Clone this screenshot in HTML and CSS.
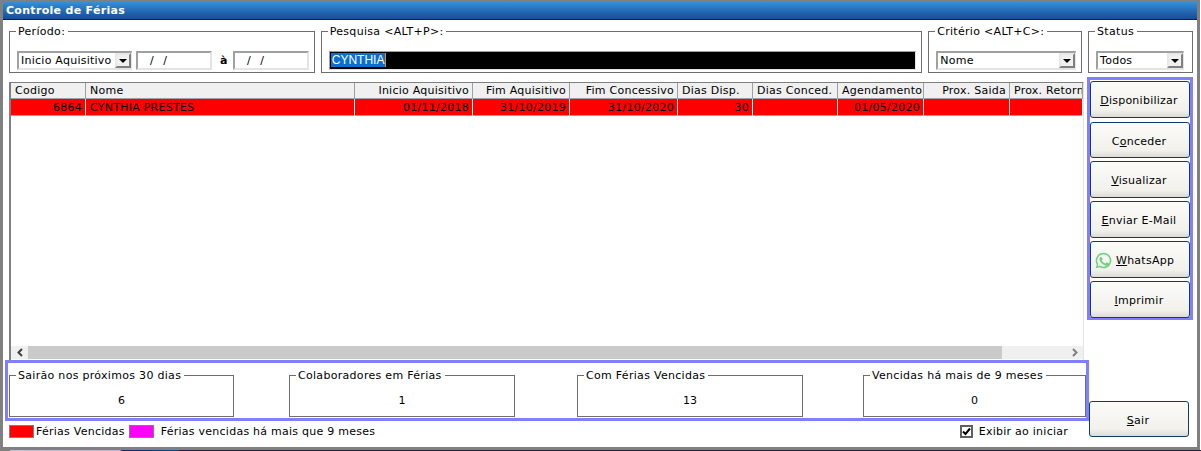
FILE: index.html
```html
<!DOCTYPE html>
<html lang="en">
<head>
    <meta charset="UTF-8">
    <title>Controle de Férias</title>
    <link rel="stylesheet" href="styles.css">
</head>
<body>
    <div class="frame">
        <div class="window">
            <div class="title-bar">Controle de Férias</div>
            <div class="content">
                <div class="filters">
                    <fieldset class="group group-periodo">
                        <legend>Período:</legend>
                        <div class="select select-periodo"><span>Inicio Aquisitivo</span><i class="arrow"></i></div>
                        <div class="date-input">/ /</div>
                        <b class="date-sep">à</b>
                        <div class="date-input">/ /</div>
                    </fieldset>
                    <fieldset class="group group-pesquisa">
                        <legend>Pesquisa &lt;ALT+P&gt;:</legend>
                        <div class="search-input"><span class="selected">CYNTHIA</span><span class="caret"></span></div>
                    </fieldset>
                    <fieldset class="group group-criterio">
                        <legend>Critério &lt;ALT+C&gt;:</legend>
                        <div class="select"><span>Nome</span><i class="arrow"></i></div>
                    </fieldset>
                    <fieldset class="group group-status">
                        <legend>Status</legend>
                        <div class="select"><span>Todos</span><i class="arrow"></i></div>
                    </fieldset>
                </div>

                <div class="middle">
                    <div class="left-col">
                        <div class="grid">
                            <table>
                                <colgroup>
                                    <col class="c1"><col class="c2"><col class="c3"><col class="c4"><col class="c5">
                                    <col class="c6"><col class="c7"><col class="c8"><col class="c9"><col class="c10">
                                </colgroup>
                                <thead>
                                    <tr>
                                        <th>Codigo</th>
                                        <th>Nome</th>
                                        <th class="right">Inicio Aquisitivo</th>
                                        <th class="right">Fim Aquisitivo</th>
                                        <th class="right">Fim Concessivo</th>
                                        <th>Dias Disp.</th>
                                        <th>Dias Conced.</th>
                                        <th class="right">Agendamento</th>
                                        <th class="right">Prox. Saida</th>
                                        <th>Prox. Retorno</th>
                                    </tr>
                                </thead>
                                <tbody>
                                    <tr class="expired">
                                        <td class="right">6864</td>
                                        <td>CYNTHIA PRESTES</td>
                                        <td class="right">01/11/2018</td>
                                        <td class="right">31/10/2019</td>
                                        <td class="right">31/10/2020</td>
                                        <td class="right">30</td>
                                        <td></td>
                                        <td class="right">01/05/2020</td>
                                        <td></td>
                                        <td></td>
                                    </tr>
                                </tbody>
                            </table>
                            <div class="scrollbar">
                                <div class="scroll-btn">
                                    <svg width="8" height="9" viewBox="0 0 8 9"><path d="M6 1 2.500 4.500 6 8" fill="none" stroke="#404040" stroke-width="2"/></svg>
                                </div>
                                <div class="scroll-thumb"></div>
                                <div class="scroll-track"></div>
                                <div class="scroll-btn">
                                    <svg width="8" height="9" viewBox="0 0 8 9"><path d="M2 1 5.500 4.500 2 8" fill="none" stroke="#808080" stroke-width="2"/></svg>
                                </div>
                            </div>
                        </div>
                        <div class="stats">
                            <fieldset class="group stat"><legend>Sairão nos próximos 30 dias</legend>6</fieldset>
                            <fieldset class="group stat"><legend>Colaboradores em Férias</legend>1</fieldset>
                            <fieldset class="group stat"><legend>Com Férias Vencidas</legend>13</fieldset>
                            <fieldset class="group stat"><legend>Vencidas há mais de 9 meses</legend>0</fieldset>
                        </div>
                        <div class="legend-row">
                            <span class="swatch swatch-red"></span>
                            <span class="legend-text">Férias Vencidas</span>
                            <span class="swatch swatch-pink"></span>
                            <span class="legend-text legend-long">Férias vencidas há mais que 9 meses</span>
                            <span class="checkbox">
                                <svg width="9" height="9" viewBox="0 0 9 9"><path d="M1 4.500 3.500 7 8 1.500" fill="none" stroke="#000" stroke-width="2"/></svg>
                            </span>
                            <span class="check-label">Exibir ao iniciar</span>
                        </div>
                    </div>

                    <div class="right-col">
                        <div class="actions">
                            <button><u>D</u>isponibilizar</button>
                            <button>C<u>o</u>nceder</button>
                            <button><u>V</u>isualizar</button>
                            <button><u>E</u>nviar E-Mail</button>
                            <button class="whatsapp">
                                <svg width="17" height="17" viewBox="0 0 24 24"><path fill="#6fd07f" d="M12 1a11 11 0 0 0-9.400 16.700L1 23l5.500-1.500A11 11 0 1 0 12 1zm0 2.200a8.800 8.800 0 1 1-4.700 16.200l-.4-.2-3 .8.800-3-.2-.4A8.800 8.800 0 0 1 12 3.200z"/><path fill="#6fd07f" d="M8.500 7c-.3 0-.7.100-1 .5-.4.400-1.200 1.200-1.200 2.800s1.200 3.200 1.400 3.400c.2.200 2.300 3.600 5.700 4.900 2.800 1.100 3.400.9 4 .8.600-.1 2-.8 2.200-1.600.3-.8.300-1.400.2-1.600-.1-.1-.3-.2-.6-.4l-2.300-1.100c-.3-.1-.5-.2-.8.200l-1 1.300c-.2.200-.4.300-.7.100-.3-.2-1.400-.5-2.700-1.700-1-.9-1.700-2-1.900-2.300-.2-.3 0-.5.100-.7l.9-1.200c.1-.2.100-.4 0-.6L9.700 7.600C9.500 7 9.200 7 9 7z"/></svg>
                                <span><u>W</u>hatsApp</span>
                            </button>
                            <button><u>I</u>mprimir</button>
                        </div>
                        <button class="exit"><u>S</u>air</button>
                    </div>
                </div>
            </div>
        </div>
    </div>
    <div class="desktop"></div>
</body>
</html>
```

FILE: styles.css
```css
html, body {
    margin: 0;
    height: 100%;
    overflow: hidden;
}
body {
    font-family: "DejaVu Sans", Verdana, sans-serif;
    font-size: 11px;
    color: #000;
    background-color: #fff;
}
.frame {
    width: 1200px;
    height: 450px;
    padding: 2px 3px 3px 3px;
    box-sizing: border-box;
    background-color: #808080;
}
.desktop {
    height: 1px;
    background: linear-gradient(to right, #808080 10px, #c4c0e4 10px, #c4b0d8 120px, #0a2a6a 122px, #0a4a8a 178px, #241c4c 180px);
}
.window {
    height: 445px;
    background-color: #fff;
    display: flex;
    flex-direction: column;
}
.title-bar {
    height: 17px;
    line-height: 17px;
    padding-left: 3px;
    color: #fff;
    font-weight: bold;
    letter-spacing: 0.3px;
    background: linear-gradient(to bottom, #3590d8, #1f5fa8 70%, #174f98);
    border-bottom: 1px solid #0a1e5c;
    flex: none;
}
.content {
    flex: 1;
    padding: 5px 4px 0 6px;
    display: flex;
    flex-direction: column;
}

/* group boxes */
.group {
    margin: 0;
    padding: 0;
    border: 1px solid #6e6e6e;
    min-width: 0;
    box-sizing: border-box;
}
.group legend {
    padding: 0 3px 0 2px;
    margin-left: 6px;
    line-height: 13px;
    letter-spacing: 0.3px;
}
.filters {
    display: flex;
    gap: 6px;
    height: 48px;
    flex: none;
}
.filters .group {
    height: 48px;
    display: flex;
    align-items: center;
    padding: 10px 5px 0 7px;
}
.filters .group legend { margin-left: -1px; }
.group-periodo { width: 306px; gap: 4px; }
.group-pesquisa { width: 602px; }
.group-criterio { width: 154px; }
.filters .group-status { width: 105px; padding-right: 8px; }
.group-periodo .date-sep { margin: 0 3px 0 4px; font-size: 11px; width: 6px; }

.select, .date-input, .search-input {
    height: 19px;
    box-sizing: border-box;
    border: 2px solid #a0a0a0;
    border-right-color: #e4e4e4;
    border-bottom-color: #e4e4e4;
    line-height: 15px;
}
.select {
    flex: 1;
    display: flex;
    align-items: center;
    justify-content: space-between;
    padding-left: 2px;
    letter-spacing: 0.25px;
    border-right: 1px solid #e4e4e4;
}
.select-periodo { flex: none; width: 115px; }
.arrow {
    width: 16px;
    height: 15px;
    box-sizing: border-box;
    flex: none;
    background-color: #f0f0f0;
    border: 2px solid;
    border-color: #e8e8e8 #808080 #808080 #e8e8e8;
    position: relative;
}
.arrow::after {
    content: "";
    position: absolute;
    left: 2px;
    top: 4px;
    border-left: 4px solid transparent;
    border-right: 4px solid transparent;
    border-top: 4px solid #000;
}
.date-input {
    width: 76px;
    padding-left: 12px;
    word-spacing: 6px;
    flex: none;
}
.search-input {
    flex: 1;
    background-color: #000;
    color: #fff;
    display: flex;
    align-items: center;
    padding-left: 1px;
    border-width: 1px;
    font-family: "Liberation Sans", Arial, sans-serif;
    font-size: 12px;
}
.selected {
    background-color: #0a6fd0;
    line-height: 14px;
    padding: 0 1px;
}
.caret {
    width: 1px;
    height: 14px;
    background-color: #f08020;
}

/* middle part */
.middle {
    flex: 1;
    display: flex;
    margin-top: 9px;
}
.left-col {
    width: 1075px;
    flex: none;
    display: flex;
    flex-direction: column;
}
.grid {
    height: 278px;
    box-sizing: border-box;
    border: 1px solid #808080;
    border-right-color: #e4e4e4;
    border-bottom: none;
    border-left-width: 2px;
    padding-bottom: 1px;
    display: flex;
    flex-direction: column;
    justify-content: space-between;
    overflow: hidden;
    flex: none;
}
table {
    border-collapse: separate;
    border-spacing: 0;
    table-layout: fixed;
    width: 1072px;
}
.c1 { width: 75px; }
.c2 { width: 269px; }
.c3 { width: 118px; }
.c4 { width: 97px; }
.c5 { width: 108px; }
.c6 { width: 75px; }
.c7 { width: 85px; }
.c8 { width: 86px; }
.c9 { width: 86px; }
.c10 { width: 73px; }
th, td {
    padding: 0 3px 0 4px;
    height: 15px;
    line-height: 14px;
    font-weight: normal;
    text-align: left;
    white-space: nowrap;
    overflow: hidden;
    letter-spacing: 0.25px;
}
th {
    background-color: #f0f0f0;
    border-right: 1px solid #a0a0a0;
    border-bottom: 1px solid #a0a0a0;
}
td {
    padding-top: 2px;
    height: 13px;
    border-right: 1px solid #fff;
    border-bottom: 1px solid #a0a0a0;
}
.right { text-align: right; }
.expired td { background-color: #ff0000; }

.scrollbar {
    height: 13px;
    display: flex;
    flex: none;
    background-color: #f0f0f0;
}
.scroll-btn {
    width: 17px;
    display: flex;
    align-items: center;
    justify-content: center;
    background-color: #f0f0f0;
    flex: none;
}
.scroll-thumb { width: 974px; background-color: #cacaca; flex: none; }
.scroll-track { flex: 1; }

/* stats, blue box */
.stats {
    display: flex;
    height: 61px;
    box-sizing: border-box;
    margin: 0 -5px 0 -4px;
    border: 3px solid #8080ff;
    padding: 6px 0 0 1px;
    flex: none;
}
.stat {
    width: 226px;
    height: 48px;
    text-align: center;
    line-height: 38px;
    flex: none;
}
.stat:nth-child(1) { width: 225px; }
.stat:nth-child(2) { margin-left: 55px; }
.stat:nth-child(3) { margin-left: 62px; }
.stat:nth-child(4) { width: 223px; margin-left: 60px; }
.stat legend {
    text-align: left;
}
.legend-row {
    display: flex;
    align-items: center;
    margin-top: 3px;
    height: 15px;
}
.swatch {
    width: 25px;
    height: 13px;
    box-sizing: border-box;
    border: 1px solid #808080;
    flex: none;
}
.swatch-red { background-color: #ff0000; }
.swatch-pink { background-color: #ff00ff; margin-left: 4px; }
.legend-text { margin-left: 2px; letter-spacing: 0.25px; }
.legend-long { margin-left: 7px; }
.checkbox {
    width: 13px;
    height: 13px;
    box-sizing: border-box;
    border: 2px solid #606060;
    margin-left: auto;
    display: flex;
    align-items: center;
    justify-content: center;
}
.check-label { margin: 0 16px 0 6px; letter-spacing: 0.25px; }

/* buttons */
.right-col {
    flex: 1;
    display: flex;
    flex-direction: column;
    position: relative;
}
.actions {
    position: absolute;
    left: 3px;
    top: -5px;
    width: 106px;
    height: 243px;
    box-sizing: border-box;
    border: 3px solid #8080ff;
    padding: 1px 0 0 0;
    display: flex;
    flex-direction: column;
    gap: 3px;
}
button {
    font-family: "DejaVu Sans", Verdana, sans-serif;
    font-size: 11px;
    letter-spacing: 0.25px;
    width: 100px;
    height: 37px;
    padding: 2px 2px 0 0;
    border: 1px solid #0f3c6e;
    border-radius: 3px;
    color: #000;
    background: linear-gradient(to bottom, #fbfbf9, #f2f1ec 80%, #dcdbd4);
    flex: none;
}
.actions button:nth-child(1) { margin-bottom: 1px; }
.actions button:nth-child(2) { height: 36px; }
.whatsapp {
    display: flex;
    align-items: center;
    padding-left: 4px;
    gap: 4px;
}
.exit {
    position: absolute;
    left: 5px;
    top: 319px;
    height: 36px;
}
```
